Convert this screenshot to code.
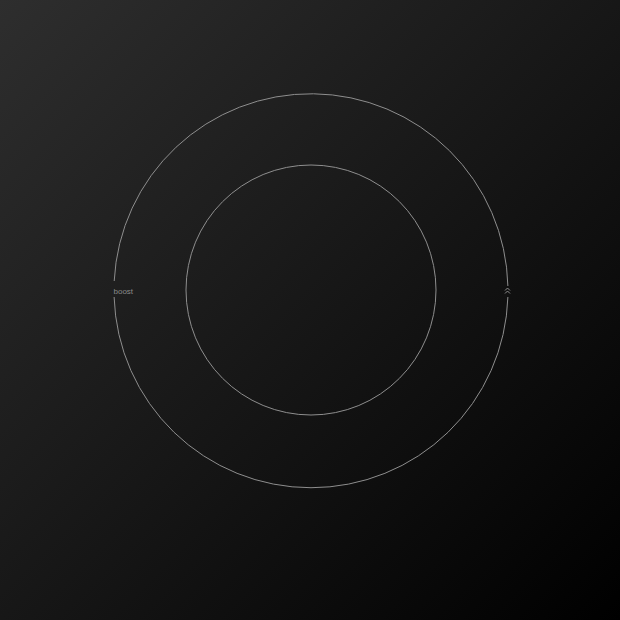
import React from "react";

export default function App() {
  return (
    <div className="w-[620px] h-[620px] bg-[linear-gradient(to_bottom_right,#2e2e2e,#000000)] relative overflow-hidden">
      <svg width="620" height="620" viewBox="0 0 620 620" className="absolute inset-0">
        <path
          d="M 507.9 297 A 197 197 0 0 1 114.1 297 M 114.2 281 A 197 197 0 0 1 507.9 286"
          fill="none"
          stroke="#8e8e8e"
          strokeWidth="1"
        />
        <circle cx="311" cy="290" r="125" fill="none" stroke="#8e8e8e" strokeWidth="1" />
        <text
          x="113.5"
          y="293.5"
          fill="#8a8a8a"
          fontSize="8"
          fontFamily="'Liberation Sans', Arial, sans-serif"
        >
          boost
        </text>
        <path
          d="M 505 290.5 L 507.5 288 L 510 290.5 M 505 293.5 L 507.5 291 L 510 293.5"
          fill="none"
          stroke="#9a9a9a"
          strokeWidth="0.9"
        />
      </svg>
    </div>
  );
}
